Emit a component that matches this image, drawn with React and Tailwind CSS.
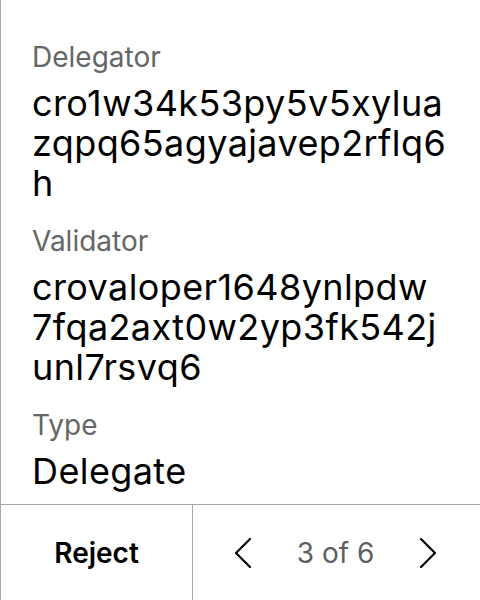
import React from "react";

function Field({ label, lines }) {
  return (
    <div className="flex flex-col gap-[8px]">
      <div className="text-[28px] leading-[36px] text-[#666666]">{label}</div>
      <div className="text-[36px] leading-[40px] tracking-[0.4px] text-black">
        {lines.map((l, i) => (
          <div key={i} className="whitespace-nowrap">{l}</div>
        ))}
      </div>
    </div>
  );
}

export default function App() {
  return (
    <div
      className="w-[480px] h-[600px] flex flex-col bg-white border-l border-[#a8a8a8]"
      style={{ fontFamily: "Inter, 'Noto Sans', sans-serif" }}
    >
      <div className="flex-1 flex flex-col gap-[20px] pl-[31px] pr-[32px] pt-[39px] overflow-hidden">
        <Field label="Delegator" lines={["cro1w34k53py5v5xylua", "zqpq65agyajavep2rflq6", "h"]} />
        <Field label="Validator" lines={["crovaloper1648ynlpdw", "7fqa2axt0w2yp3fk542j", "unl7rsvq6"]} />
        <Field label="Type" lines={["Delegate"]} />
      </div>
      <div className="h-[96px] shrink-0 flex border-t border-[#a8a8a8]">
        <div className="w-[192px] flex items-center justify-center border-r border-[#a8a8a8] text-[28px] font-semibold text-black">
          Reject
        </div>
        <div className="flex-1 flex items-center justify-center gap-[45px] pr-[2px]">
          <svg width="18" height="32" viewBox="0 0 18 32" fill="none">
            <path d="M16 2 L2 16 L16 30" stroke="black" strokeWidth="2.2" strokeLinecap="round" strokeLinejoin="round" />
          </svg>
          <span className="text-[28px] text-[#5f5f5f]">3 of 6</span>
          <svg width="18" height="32" viewBox="0 0 18 32" fill="none">
            <path d="M2 2 L16 16 L2 30" stroke="black" strokeWidth="2.2" strokeLinecap="round" strokeLinejoin="round" />
          </svg>
        </div>
      </div>
    </div>
  );
}
